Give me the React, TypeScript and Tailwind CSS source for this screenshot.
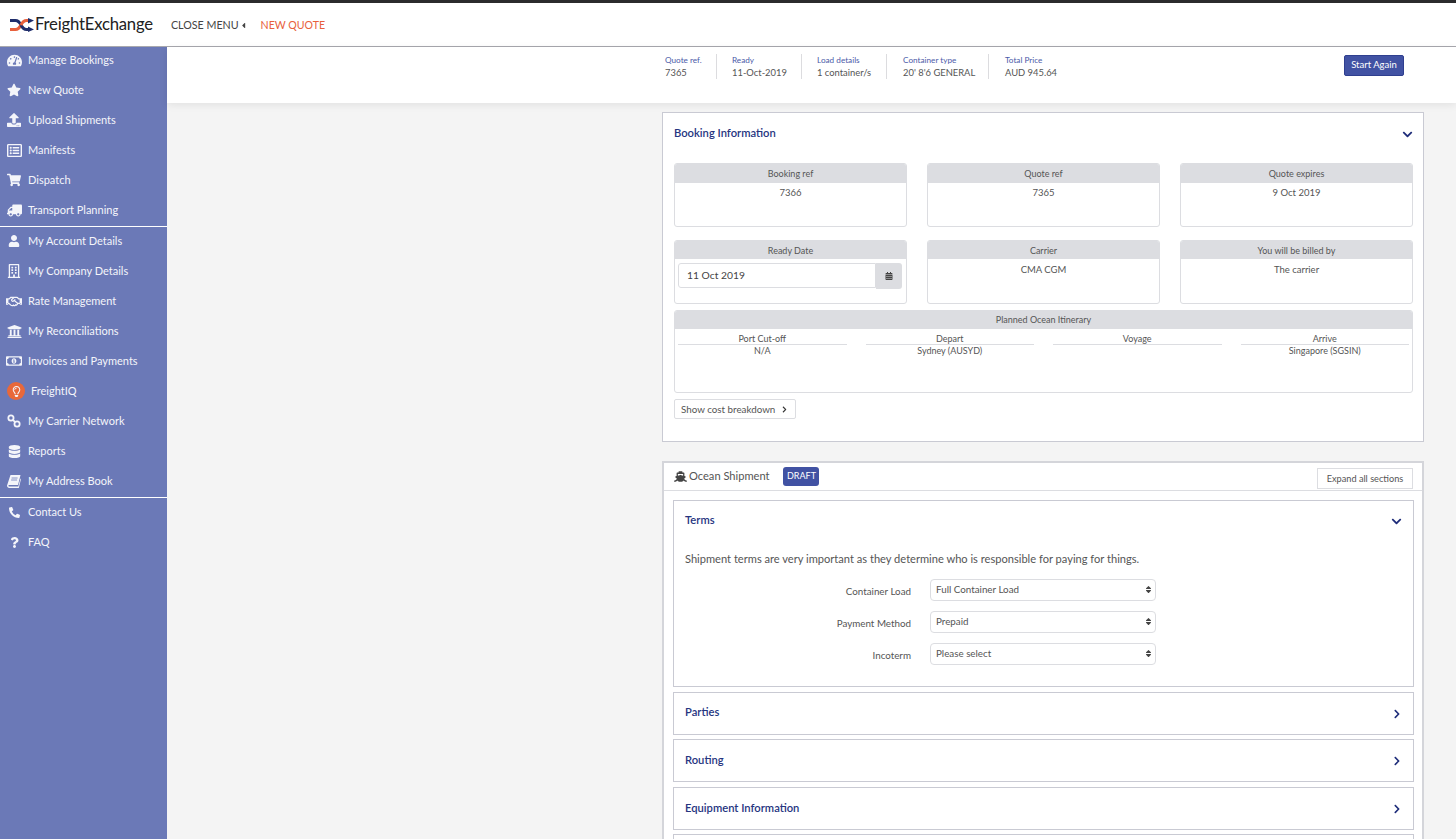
import React from "react";
import {
  FaTachometerAlt, FaStar, FaUpload, FaRegListAlt, FaShoppingCart, FaTruck, FaUser, FaRegBuilding,
  FaRegHandshake, FaUniversity, FaRegMoneyBillAlt, FaRegLightbulb, FaDatabase, FaPhoneAlt, FaQuestion,
  FaShip, FaChevronDown, FaChevronRight, FaCalendarAlt, FaSort, FaCaretLeft,
} from "react-icons/fa";

const font = { fontFamily: '"Lato", "Open Sans", sans-serif' };

function NetworkIcon() {
  return (
    <svg width="14" height="14" viewBox="0 0 16 16" fill="none" stroke="currentColor" strokeWidth="2">
      <circle cx="4.5" cy="4.5" r="3" />
      <circle cx="11.5" cy="11.5" r="3" />
      <path d="M7 7l2 2" />
    </svg>
  );
}

function BookIcon() {
  return (
    <svg width="14" height="13" viewBox="0 0 14 13" fill="currentColor">
      <path d="M3.5 0H13.5L11 10H2.2C1.6 10 1.4 10.5 1.5 11C1.6 11.4 2 11.6 2.4 11.6H11.3L13.5 3.5L14 4L11.8 13H2.4C1 13 0 12 0 10.8C0 10.5 0.1 10.2 0.2 10Z" />
      <path d="M4.6 3h6M4.1 5h6" stroke="#6b79b7" strokeWidth="0.8" fill="none" />
    </svg>
  );
}

function Logo() {
  return (
    <svg width="24" height="14" viewBox="0 0 24 14" fill="none">
      <path d="M0 2.5h5.5c3 0 4 1.5 5.5 4.5" stroke="#1f2d6b" strokeWidth="3" />
      <path d="M0 11.5h5.5c3 0 4-1.5 5.5-4.5" stroke="#e8603c" strokeWidth="3" />
      <path d="M11 7c1.5 3 2.5 4.5 5.5 4.5h2" stroke="#1f2d6b" strokeWidth="3" />
      <path d="M11 7c1.5-3 2.5-4.5 5.5-4.5h2" stroke="#e8603c" strokeWidth="3" />
      <path d="M18 0l6 2.5-6 3zM18 8.500l6 3-6 2.500z" fill="#1f2d6b" />
    </svg>
  );
}

type Item = { icon: React.ReactNode; label: string };
const g1: Item[] = [
  { icon: <FaTachometerAlt size={15} />, label: "Manage Bookings" },
  { icon: <FaStar size={14} />, label: "New Quote" },
  { icon: <FaUpload size={14} />, label: "Upload Shipments" },
  { icon: <FaRegListAlt size={15} />, label: "Manifests" },
  { icon: <FaShoppingCart size={14} />, label: "Dispatch" },
  { icon: <FaTruck size={15} className="-scale-x-100" />, label: "Transport Planning" },
];
const g2: Item[] = [
  { icon: <FaUser size={12} />, label: "My Account Details" },
  { icon: <FaRegBuilding size={14} />, label: "My Company Details" },
  { icon: <FaRegHandshake size={17} />, label: "Rate Management" },
  { icon: <FaUniversity size={15} />, label: "My Reconciliations" },
  { icon: <FaRegMoneyBillAlt size={16} />, label: "Invoices and Payments" },
];
const g3: Item[] = [
  { icon: <NetworkIcon />, label: "My Carrier Network" },
  { icon: <FaDatabase size={13} />, label: "Reports" },
  { icon: <BookIcon />, label: "My Address Book" },
];
const g4: Item[] = [
  { icon: <FaPhoneAlt size={11} />, label: "Contact Us" },
  { icon: <FaQuestion size={11} />, label: "FAQ" },
];

function NavRow({ item }: { item: Item }) {
  return (
    <div className="flex h-[30px] items-center text-[11px] text-[#f4f5fa]">
      <span className="flex w-[28px] shrink-0 justify-center">
        <span className="flex w-[16px] justify-center">{item.icon}</span>
      </span>
      <span>{item.label}</span>
    </div>
  );
}

function Sidebar() {
  return (
    <aside className="w-[167px] shrink-0 bg-[#6b79b7]">
      <div className="-mt-[2px]">
        {g1.map((i) => <NavRow key={i.label} item={i} />)}
      </div>
      <div className="mt-[1px] border-t border-white">
        <div className="-mt-[1px]">
          {g2.map((i) => <NavRow key={i.label} item={i} />)}
          <div className="flex h-[30px] items-center text-[11px] text-[#f4f5fa]">
            <span className="ml-[7px] flex h-[18px] w-[18px] items-center justify-center rounded-full bg-[#e8683a]">
              <FaRegLightbulb size={11} />
            </span>
            <span className="ml-[6px]">FreightIQ</span>
          </div>
          {g3.map((i) => <NavRow key={i.label} item={i} />)}
        </div>
      </div>
      <div className="mt-[1px] border-t border-white">
        <div className="-mt-[1px]">
          {g4.map((i) => <NavRow key={i.label} item={i} />)}
        </div>
      </div>
    </aside>
  );
}

function Summary({ label, value, className }: { label: string; value: string; className: string }) {
  return (
    <div className={className}>
      <div className="text-[8.2px] leading-[12px] text-[#4a5aa8]">{label}</div>
      <div className="text-[9.4px] leading-[13px] text-[#555]">{value}</div>
    </div>
  );
}

function InfoCard({ title, head, children }: { title: string; head: string; children?: React.ReactNode }) {
  return (
    <div className="h-[64px] overflow-hidden rounded-[3px] border border-[#dcdde1] bg-white">
      <div className={`flex ${head} items-center justify-center bg-[#dcdde1] text-[9px] text-[#555]`}>{title}</div>
      {children}
    </div>
  );
}

function Val({ children, pad }: { children: React.ReactNode; pad: string }) {
  return <div className={`${pad} text-center text-[9.5px] leading-[14px] text-[#555]`}>{children}</div>;
}

function Itin({ title, value }: { title: string; value?: string }) {
  return (
    <div className="flex-1 text-center text-[9px] leading-[11px] text-[#555]">
      <div className="border-b border-[#dcdde1] pt-[4px] leading-[11px]">{title}</div>
      <div className="leading-[12px]">{value}</div>
    </div>
  );
}

function Field({ label, value }: { label: string; value: string }) {
  return (
    <div className="flex h-[32px] items-start">
      <div className="w-[226px] shrink-0 pt-[5px] text-right text-[9.8px] leading-[14px] text-[#555]">{label}</div>
      <div className="relative ml-[19px] h-[22px] w-[226px] rounded-[4px] border border-[#dcdde1] bg-white">
        <select defaultValue={value} className="block h-[19px] w-full appearance-none bg-transparent py-0 pl-[5px] text-[9.8px] leading-[19px] text-[#555] outline-none" style={font}>
          <option>{value}</option>
        </select>
        <FaSort size={9} className="absolute top-[5px] right-[2px] text-[#444]" />
      </div>
    </div>
  );
}

function Section({ title, gap, title2 = "mb-[2px]" }: { title: string; gap: string; title2?: string }) {
  return (
    <div className={`${gap} flex h-[43px] shrink-0 items-center justify-between border border-[#c9cad3] bg-white px-[11px]`}>
      <span className={`${title2} text-[11.2px] font-semibold text-[#26357f]`}>{title}</span>
      <FaChevronRight size={10} className="text-[#1f2d7a]" />
    </div>
  );
}

export default function App() {
  return (
    <div className="flex h-[839px] w-[1456px] flex-col overflow-hidden bg-[#f4f4f4]" style={font}>
      <div className="h-[3px] shrink-0 bg-[#2b2b2d]" />
      <header className="flex h-[44px] shrink-0 items-center border-b border-[#a8a8ae] bg-white pl-[10px]">
        <Logo />
        <span className="ml-[1px] text-[16.7px] tracking-[-0.2px] text-[#222]">FreightExchange</span>
        <span className="ml-[18px] mt-[2px] text-[10.7px] text-[#444]">CLOSE MENU</span>
        <FaCaretLeft size={9} className="mt-[2px] text-[#444]" />
        <span className="ml-[13px] mt-[2px] text-[10.6px] text-[#e8603c]">NEW QUOTE</span>
      </header>
      <div className="flex min-h-0 flex-1">
        <Sidebar />
        <main className="flex min-w-0 flex-1 flex-col">
          <div className="flex h-[56px] shrink-0 items-start bg-white pt-[7px] pr-[52px] pl-[498px] shadow-[0_2px_8px_rgba(0,0,0,0.08)]">
            <Summary className="w-[52px] border-r border-[#dcdcdf]" label="Quote ref." value="7365" />
            <Summary className="w-[85px] border-r border-[#dcdcdf] pl-[15px]" label="Ready" value="11-Oct-2019" />
            <Summary className="w-[85px] border-r border-[#dcdcdf] pl-[15px]" label="Load details" value="1 container/s" />
            <Summary className="w-[102px] border-r border-[#dcdcdf] pl-[16px]" label="Container type" value="20' 8'6 GENERAL" />
            <Summary className="pl-[16px]" label="Total Price" value="AUD 945.64" />
            <button className="ml-auto mt-[1px] h-[21px] w-[60px] rounded-[2px] border border-[#2f3f8f] bg-[#4152a3] text-[9.5px] text-white">Start Again</button>
          </div>
          <div className="flex flex-col pt-[9px] pr-[32px] pl-[495px]">
            <section className="h-[330px] border border-[#c9cad3] bg-white pr-[10px] pl-[11px]">
              <div className="mb-[8px] flex h-[42px] items-center justify-between">
                <span className="mb-[1px] text-[11.2px] font-semibold text-[#26357f]">Booking Information</span>
                <FaChevronDown size={11} className="text-[#1f2d7a]" />
              </div>
              <div className="grid grid-cols-3 gap-x-[20px] gap-y-[13px]">
                <InfoCard head="h-[19px]" title="Booking ref"><Val pad="pt-[3px]">7366</Val></InfoCard>
                <InfoCard head="h-[19px]" title="Quote ref"><Val pad="pt-[3px]">7365</Val></InfoCard>
                <InfoCard head="h-[19px]" title="Quote expires"><Val pad="pt-[3px]">9 Oct 2019</Val></InfoCard>
                <InfoCard head="h-[18px] pt-[1px]" title="Ready Date">
                  <div className="mt-[4px] mr-[4px] ml-[3px] flex h-[26px]">
                    <div className="mb-[1px] flex flex-1 items-center rounded-l-[3px] border border-[#dcdde1] pl-[8px] text-[10.3px] text-[#444]">11 Oct 2019</div>
                    <div className="flex w-[26px] items-center justify-center rounded-r-[3px] bg-[#dcdde1] text-[#444]"><FaCalendarAlt size={8} /></div>
                  </div>
                </InfoCard>
                <InfoCard head="h-[18px] pt-[1px]" title="Carrier"><Val pad="pt-[4px]">CMA CGM</Val></InfoCard>
                <InfoCard head="h-[18px] pt-[1px]" title="You will be billed by"><Val pad="pt-[4px]">The carrier</Val></InfoCard>
              </div>
              <div className="mt-[6px] h-[83px] overflow-hidden rounded-[3px] border border-[#dcdde1]">
                <div className="flex h-[18px] items-center justify-center bg-[#dcdde1] text-[9px] text-[#555]">Planned Ocean Itinerary</div>
                <div className="flex gap-x-[19px] px-[3px]">
                  <Itin title="Port Cut-off" value="N/A" />
                  <Itin title="Depart" value="Sydney (AUSYD)" />
                  <Itin title="Voyage" />
                  <Itin title="Arrive" value="Singapore (SGSIN)" />
                </div>
              </div>
              <button className="mt-[6px] flex h-[20px] w-[122px] items-center rounded-[2px] border border-[#dcdde1] pl-[6px] text-[9.8px] text-[#555]">
                Show cost breakdown
                <FaChevronRight size={7} className="ml-[6px] text-[#333]" />
              </button>
            </section>
            <section className="mt-[19px] border-2 border-b-0 border-[#d4d5da] bg-white">
              <div className="flex h-[28px] items-center border-b border-[#dcdde1] pr-[9px] pl-[10px]">
                <FaShip size={13} className="mb-[1px] text-[#444]" />
                <span className="mb-[1px] ml-[2px] text-[11.1px] text-[#555]">Ocean Shipment</span>
                <span className="mb-[1px] ml-[14px] flex h-[19px] w-[36px] items-center justify-center rounded-[3px] bg-[#4152a3] text-[9px] text-white">DRAFT</span>
                <button className="ml-auto mt-[4px] h-[21px] w-[96px] border border-[#dcdde1] text-[9.2px] text-[#555]">Expand all sections</button>
              </div>
              <div className="flex flex-col pt-[9px] pr-[8px] pl-[9px]">
                <div className="h-[187px] border border-[#c9cad3] pr-[11px] pl-[11px]">
                  <div className="flex h-[40px] items-center justify-between">
                    <span className="mb-[1px] text-[11.2px] font-semibold text-[#26357f]">Terms</span>
                    <FaChevronDown size={11} className="text-[#1f2d7a]" />
                  </div>
                  <p className="mt-[10px] text-[11.1px] leading-[16px] text-[#555]">Shipment terms are very important as they determine who is responsible for paying for things.</p>
                  <div className="mt-[12px]">
                    <Field label="Container Load" value="Full Container Load" />
                    <Field label="Payment Method" value="Prepaid" />
                    <Field label="Incoterm" value="Please select" />
                  </div>
                </div>
                <Section title="Parties" gap="mt-[5px]" />
                <Section title="Routing" gap="mt-[4px]" title2="" />
                <Section title="Equipment Information" gap="mt-[5px]" title2="mb-[1px]" />
                <Section title="" gap="mt-[4px]" />
              </div>
            </section>
          </div>
        </main>
      </div>
    </div>
  );
}
